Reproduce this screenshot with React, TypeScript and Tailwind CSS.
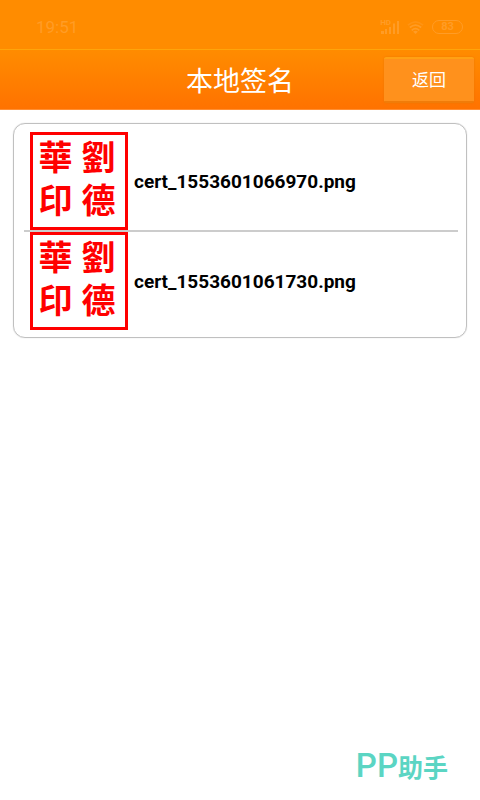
type SealFile = {
  id: number;
  name: string;
}

const files: SealFile[] = [
  { id: 1, name: "cert_1553601066970.png" },
  { id: 2, name: "cert_1553601061730.png" },
]

const sealCharacters = ["華", "劉", "印", "德"]

function StatusBar() {
  return (
    <div className="flex h-[49px] items-center justify-between bg-[#ff8c00] pl-9 pr-[17px] pt-1 text-[#ff9c26]">
      <span className="text-[17px] leading-6">19:51</span>
      <div className="flex items-center gap-2">
        <div className="flex items-start">
          <span className="-mr-[10px] text-[8px] font-bold leading-[6px]">HD</span>
          <svg width="18" height="14" viewBox="0 0 18 14" fill="currentColor" aria-hidden="true">
            <rect x="0" y="11" width="3" height="3" />
            <rect x="4" y="9" width="2" height="5" />
            <rect x="8" y="7" width="2" height="7" />
            <rect x="12" y="3.5" width="2" height="10.5" />
            <rect x="16" y="1" width="2" height="13" />
          </svg>
        </div>
        <svg width="17" height="16" viewBox="0 0 18 16" fill="none" stroke="currentColor" strokeWidth="1.8" aria-hidden="true">
          <path d="M1 6 Q9 -1 17 6" opacity="0.5" />
          <path d="M3 8.5 Q9 3.5 15 8.5" />
          <path d="M5 11.5 Q9 8 13 11.5" />
          <path d="M6.5 13 Q9 11 11.5 13 L9 15.5 Z" fill="currentColor" stroke="none" />
        </svg>
        <div className="flex h-[14px] w-[31px] items-center justify-center rounded-full border border-current text-[11px] font-bold leading-3">83</div>
      </div>
    </div>
  )
}

function Seal() {
  return (
    <div className="grid h-[98px] w-[98px] shrink-0 grid-cols-[43px_43px] grid-rows-[43px_43px] border-[3px] border-[#ff0000] pl-px pt-[2px] font-['Liberation_Serif','Noto_Sans_CJK_TC',sans-serif] text-[34px] font-bold leading-[43px] text-[#ff0000]">
      {sealCharacters.map((character) => (
        <span key={character} className="text-center">{character}</span>
      ))}
    </div>
  )
}

export default function App() {
  return (
    <div className="flex min-h-screen flex-col bg-white font-[Roboto,'Noto_Sans_CJK_SC',sans-serif]">
      <StatusBar />

      <header className="grid h-[61px] grid-cols-[1fr_auto_1fr] items-center border-b border-t border-b-[#ff8f33] border-t-[#ffa50a] bg-linear-to-b from-[#ff8c00] to-[#ff7200] pr-[6px] text-white">
        <h1 className="col-start-2 pl-[6px] pt-1 text-[27px] leading-10">本地签名</h1>
        <button
          type="button"
          className="h-[46px] w-[90px] justify-self-end rounded-xs border-b-2 border-t-2 border-b-[#f17c08] border-t-[#ffa114] bg-[#ff911c] text-[17px] leading-6 shadow-[0_0_2px_#e97500]"
        >
          返回
        </button>
      </header>

      <main className="flex-1 px-[13px] pt-[13px]">
        <ul className="rounded-xl border border-[#c0c0c0] pb-[7px] pl-[10px] pr-2 pt-2 shadow-[0_0_1px_#c0c0c0]">
          {files.map((file) => (
            <li
              key={file.id}
              className="flex items-center gap-[6px] border-b-2 border-[#cccccc] pl-[6px] last:border-b-0"
            >
              <Seal />
              <span className="pt-[2px] text-[19px] font-bold leading-6 text-black">{file.name}</span>
            </li>
          ))}
        </ul>
      </main>

      <footer className="flex items-center justify-end pb-[14px] pr-8 text-[#5bd5c3]">
        <span className="text-[33px] font-medium leading-10">PP</span>
        <span className="font-['Noto_Sans_CJK_SC',sans-serif] text-[25px] font-bold leading-10">助手</span>
      </footer>
    </div>
  )
}
